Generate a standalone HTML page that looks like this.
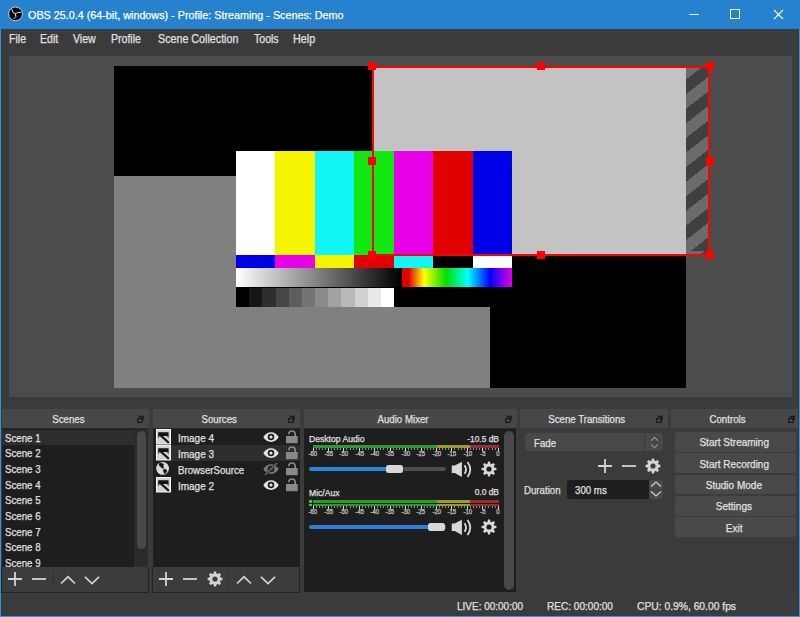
<!DOCTYPE html>
<html><head><meta charset="utf-8">
<style>
*{margin:0;padding:0;box-sizing:border-box}
html,body{width:800px;height:617px;overflow:hidden;background:#3b3b3b;font-family:"Liberation Sans",sans-serif;color:#e1e0e1}
.a{position:absolute}
.t{position:absolute;white-space:nowrap;transform-origin:0 0;line-height:1}
.tc{position:absolute;white-space:nowrap;text-align:center;line-height:1}
.tc span{display:inline-block;transform-origin:50% 0}
.t,.tc{-webkit-text-stroke:0.25px currentColor}
</style></head><body>
<!-- window frame -->
<div class="a" style="left:0;top:0;width:800px;height:29px;background:#2682cf"></div>
<div class="a" style="left:0;top:29px;width:1px;height:588px;background:#3990dc"></div>
<div class="a" style="left:799px;top:29px;width:1px;height:588px;background:#3990dc"></div>
<div class="a" style="left:0;top:616px;width:800px;height:1px;background:#3990dc"></div>
<div class="a" style="left:793px;top:29px;width:1px;height:587px;background:rgba(45,65,85,0.35)"></div>

<!-- OBS logo -->
<svg class="a" style="left:5px;top:4px" width="22" height="21" viewBox="5 4 22 21">
<circle cx="15.5" cy="13.9" r="6.9" fill="#080808" stroke="#d8d8d8" stroke-width="0.9"/>
<g fill="none" stroke="#e0e0e0" stroke-width="1" stroke-linecap="round">
<path d="M15.5 14 Q12.3 13.6 11.9 9.6"/>
<path d="M15.5 14 Q17.2 11.4 20.6 12.3"/>
<path d="M15.5 14 Q17.2 16.8 14.2 18.6"/>
</g>
</svg>
<div class="t" style="left:28px;top:9.5px;font-size:11.2px;color:#fff;transform:scaleX(0.963)">OBS 25.0.4 (64-bit, windows) - Profile: Streaming - Scenes: Demo</div>

<!-- window controls -->
<div class="a" style="left:689px;top:14px;width:10px;height:1px;background:#fff"></div>
<div class="a" style="left:730px;top:9px;width:10px;height:10px;border:1px solid #fff"></div>
<svg class="a" style="left:772.5px;top:8.5px" width="11" height="11" viewBox="0 0 11 11"><path d="M1 1L10 10M10 1L1 10" stroke="#fff" stroke-width="1.1"/></svg>

<!-- menu -->
<div class="t" style="left:9px;top:32.5px;font-size:12px;transform:scaleX(0.88)">File</div>
<div class="t" style="left:40px;top:32.5px;font-size:12px;transform:scaleX(0.88)">Edit</div>
<div class="t" style="left:73px;top:32.5px;font-size:12px;transform:scaleX(0.88)">View</div>
<div class="t" style="left:111px;top:32.5px;font-size:12px;transform:scaleX(0.88)">Profile</div>
<div class="t" style="left:157.5px;top:32.5px;font-size:12px;transform:scaleX(0.893)">Scene Collection</div>
<div class="t" style="left:253.5px;top:32.5px;font-size:12px;transform:scaleX(0.88)">Tools</div>
<div class="t" style="left:293px;top:32.5px;font-size:12px;transform:scaleX(0.9)">Help</div>

<!-- preview -->
<div class="a" style="left:8.5px;top:56px;width:783px;height:341px;background:#4c4c4c"></div>
<div class="a" id="canvas" style="left:114px;top:66px;width:572px;height:322px;background:#000;overflow:hidden">
<div class="a" style="left:0;top:110px;width:376px;height:212px;background:#808080"></div>
<div class="a" style="left:258px;top:0;width:314px;height:189px;background:#c3c3c3"></div>
<div class="a" id="bars" style="left:122px;top:85px;width:276px;height:156px;background:#000">
 <div class="a" style="left:0;top:0;width:276px;height:104px;display:flex">
  <div style="flex:1;background:#fff"></div><div style="flex:1;background:#f5f500"></div><div style="flex:1;background:#10f5f5"></div><div style="flex:1;background:#10e810"></div><div style="flex:1;background:#e800e8"></div><div style="flex:1;background:#e00000"></div><div style="flex:1;background:#0000e8"></div>
 </div>
 <div class="a" style="left:0;top:104px;width:276px;height:13px;display:flex">
  <div style="flex:1;background:#0000e8"></div><div style="flex:1;background:#e800e8"></div><div style="flex:1;background:#f5f500"></div><div style="flex:1;background:#e00000"></div><div style="flex:1;background:#10f5f5"></div><div style="flex:1;background:#000"></div><div style="flex:1;background:#fff"></div>
 </div>
 <div class="a" style="left:0;top:117px;width:165px;height:19px;background:linear-gradient(to right,#fff,#000)"></div>
 <div class="a" style="left:166px;top:117px;width:110px;height:19px;background:linear-gradient(to right,#e00000 0%,#e00000 6%,#ffff00 20%,#00e000 40%,#00ffff 60%,#0000ff 80%,#e000e0 100%)"></div>
 <div class="a" style="left:0;top:137px;width:158px;height:19px;display:flex">
  <div style="flex:1;background:#000"></div><div style="flex:1;background:#171717"></div><div style="flex:1;background:#2e2e2e"></div><div style="flex:1;background:#464646"></div><div style="flex:1;background:#5d5d5d"></div><div style="flex:1;background:#747474"></div><div style="flex:1;background:#8b8b8b"></div><div style="flex:1;background:#a2a2a2"></div><div style="flex:1;background:#b9b9b9"></div><div style="flex:1;background:#d1d1d1"></div><div style="flex:1;background:#e8e8e8"></div><div style="flex:1;background:#fff"></div>
 </div>
</div>
</div>
<!-- hatch outside canvas -->
<div class="a" style="left:686px;top:68px;width:22px;height:186px;background:repeating-linear-gradient(142deg,#6b6b6b 0px,#6b6b6b 11.5px,#404040 11.5px,#404040 23px);background-position:0 -3px"></div>
<!-- selection box -->
<div class="a" style="left:372px;top:66px;width:338px;height:190px;border:2px solid #ff0000"></div>
<div class="a" style="left:368px;top:62px;width:8px;height:8px;background:#f00"></div>
<div class="a" style="left:537px;top:62px;width:8px;height:8px;background:#f00"></div>
<div class="a" style="left:706px;top:62px;width:8px;height:8px;background:#f00"></div>
<div class="a" style="left:368px;top:157px;width:8px;height:8px;background:#f00"></div>
<div class="a" style="left:706px;top:157px;width:8px;height:8px;background:#f00"></div>
<div class="a" style="left:368px;top:251px;width:8px;height:8px;background:#f00"></div>
<div class="a" style="left:537px;top:251px;width:8px;height:8px;background:#f00"></div>
<div class="a" style="left:706px;top:251px;width:8px;height:8px;background:#f00"></div>

<!-- DOCKS -->
<div class="a" style="left:2px;top:409px;width:147px;height:19px;background:#474747"></div>
<div class="tc" style="left:8.5px;top:413.7px;width:120px;font-size:11px"><span style="transform:scaleX(0.88)">Scenes</span></div>
<svg class="a" style="left:137.2px;top:414.5px" width="8" height="8" viewBox="0 0 8 8"><path d="M1.8 0.8H6.8V4.8H5.6V2.2H1.8Z" fill="#141414"/><rect x="0.75" y="3.6" width="4.4" height="3.6" fill="#505050" stroke="#141414" stroke-width="1.3"/></svg>
<div class="a" style="left:2px;top:428px;width:147px;height:1px;background:#2a292a"></div>
<div class="a" style="left:2px;top:429px;width:132px;height:138px;background:#1f1e1f;overflow:hidden">
<div class="a" style="left:0;top:1px;width:132px;height:14.8px;background:#2f2e2f"></div>
<div class="t" style="left:3px;top:3.70px;font-size:11px;transform:scaleX(0.88)">Scene 1</div>
<div class="t" style="left:3px;top:19.34px;font-size:11px;transform:scaleX(0.88)">Scene 2</div>
<div class="t" style="left:3px;top:34.98px;font-size:11px;transform:scaleX(0.88)">Scene 3</div>
<div class="t" style="left:3px;top:50.62px;font-size:11px;transform:scaleX(0.88)">Scene 4</div>
<div class="t" style="left:3px;top:66.26px;font-size:11px;transform:scaleX(0.88)">Scene 5</div>
<div class="t" style="left:3px;top:81.90px;font-size:11px;transform:scaleX(0.88)">Scene 6</div>
<div class="t" style="left:3px;top:97.54px;font-size:11px;transform:scaleX(0.88)">Scene 7</div>
<div class="t" style="left:3px;top:113.18px;font-size:11px;transform:scaleX(0.88)">Scene 8</div>
<div class="t" style="left:3px;top:128.82px;font-size:11px;transform:scaleX(0.88)">Scene 9</div>
</div>
<div class="a" style="left:134px;top:429px;width:14px;height:138px;background:#2c2b2c"></div>
<div class="a" style="left:137px;top:431px;width:9px;height:118px;background:#4a494a;border-radius:4.5px"></div>
<div class="a" style="left:153px;top:409px;width:147px;height:19px;background:#474747"></div>
<div class="tc" style="left:159.5px;top:413.7px;width:120px;font-size:11px"><span style="transform:scaleX(0.88)">Sources</span></div>
<svg class="a" style="left:287.7px;top:414.5px" width="8" height="8" viewBox="0 0 8 8"><path d="M1.8 0.8H6.8V4.8H5.6V2.2H1.8Z" fill="#141414"/><rect x="0.75" y="3.6" width="4.4" height="3.6" fill="#505050" stroke="#141414" stroke-width="1.3"/></svg>
<div class="a" style="left:153px;top:428px;width:147px;height:1px;background:#2a292a"></div>
<div class="a" style="left:153px;top:429px;width:147px;height:138px;background:#1f1e1f;overflow:hidden">
<div class="a" style="left:18px;top:16px;width:129px;height:16px;background:#2f2e2f"></div>
<div class="t" style="left:24.5px;top:3.7px;font-size:11px;transform:scaleX(0.905)">Image 4</div>
<div class="t" style="left:24.5px;top:19.7px;font-size:11px;transform:scaleX(0.905)">Image 3</div>
<div class="t" style="left:24.5px;top:35.7px;font-size:11px;transform:scaleX(0.88)">BrowserSource</div>
<div class="t" style="left:24.5px;top:51.7px;font-size:11px;transform:scaleX(0.905)">Image 2</div>
</div>
<svg class="a" style="left:156px;top:428.5px" width="15" height="16" viewBox="0 0 15 16"><rect x="0.5" y="0.5" width="14" height="14.5" fill="#d2d2d2" stroke="#f2f2f2" stroke-width="1"/><path d="M2.2 3.2H12.6V8.4H11.6V7.1H3.2V8.4H2.2Z" fill="#111"/><path d="M5 6.8L12.2 13.2" stroke="#111" stroke-width="2.2" stroke-linecap="round"/></svg>
<svg class="a" style="left:263px;top:430.8px" width="16" height="12" viewBox="0 0 16 12"><path d="M0.3 6C4 -0.5 12 -0.5 15.7 6C12 12.5 4 12.5 0.3 6Z" fill="#e4e4e4"/><circle cx="8" cy="6" r="3.3" fill="#1f1e1f"/><circle cx="8" cy="6" r="1.6" fill="#e4e4e4"/></svg>
<svg class="a" style="left:285px;top:429px" width="13" height="16" viewBox="0 0 13 16"><path d="M3.8 5.2A3.2 3.2 0 0 1 10.2 5.2V7.5" fill="none" stroke="#8a898a" stroke-width="1.6"/><rect x="1" y="7" width="11.7" height="7.2" fill="#8a898a"/></svg>
<svg class="a" style="left:156px;top:444.5px" width="15" height="16" viewBox="0 0 15 16"><rect x="0.5" y="0.5" width="14" height="14.5" fill="#d2d2d2" stroke="#f2f2f2" stroke-width="1"/><path d="M2.2 3.2H12.6V8.4H11.6V7.1H3.2V8.4H2.2Z" fill="#111"/><path d="M5 6.8L12.2 13.2" stroke="#111" stroke-width="2.2" stroke-linecap="round"/></svg>
<svg class="a" style="left:263px;top:446.8px" width="16" height="12" viewBox="0 0 16 12"><path d="M0.3 6C4 -0.5 12 -0.5 15.7 6C12 12.5 4 12.5 0.3 6Z" fill="#e4e4e4"/><circle cx="8" cy="6" r="3.3" fill="#1f1e1f"/><circle cx="8" cy="6" r="1.6" fill="#e4e4e4"/></svg>
<svg class="a" style="left:285px;top:445px" width="13" height="16" viewBox="0 0 13 16"><path d="M3.8 5.2A3.2 3.2 0 0 1 10.2 5.2V7.5" fill="none" stroke="#8a898a" stroke-width="1.6"/><rect x="1" y="7" width="11.7" height="7.2" fill="#8a898a"/></svg>
<svg class="a" style="left:156px;top:461px" width="15" height="16" viewBox="0 0 15 16"><circle cx="6.6" cy="7.4" r="6.4" fill="#dcdcdc"/><path d="M3.67 1.89L6.1 2.21L7.72 3.51L7.08 4.81L7.72 6.43L6.75 7.4L5.46 6.75L4.48 5.46L3.35 4.97L3.19 3.19Z" fill="#141414" stroke="#141414" stroke-width="0.5" stroke-linejoin="round"/><path d="M7.72 8.05L9.67 8.37L10.97 9.67L10.64 10.97L9.35 11.94L8.7 12.91L8.05 11.61L7.4 9.99Z" fill="#141414" stroke="#141414" stroke-width="0.5" stroke-linejoin="round"/></svg>
<svg class="a" style="left:263px;top:462.8px" width="16" height="12" viewBox="0 0 16 12"><path d="M0.3 6C4 -0.5 12 -0.5 15.7 6C12 12.5 4 12.5 0.3 6Z" fill="#7a797a"/><circle cx="8" cy="6" r="3.3" fill="#1f1e1f"/><circle cx="8" cy="6" r="1.6" fill="#7a797a"/><path d="M2 12L14 0" stroke="#1f1e1f" stroke-width="2.4"/><path d="M2 12L14 0" stroke="#7a797a" stroke-width="1.1"/></svg>
<svg class="a" style="left:285px;top:461px" width="13" height="16" viewBox="0 0 13 16"><path d="M3.8 5.2A3.2 3.2 0 0 1 10.2 5.2V7.5" fill="none" stroke="#8a898a" stroke-width="1.6"/><rect x="1" y="7" width="11.7" height="7.2" fill="#8a898a"/></svg>
<svg class="a" style="left:156px;top:476.5px" width="15" height="16" viewBox="0 0 15 16"><rect x="0.5" y="0.5" width="14" height="14.5" fill="#d2d2d2" stroke="#f2f2f2" stroke-width="1"/><path d="M2.2 3.2H12.6V8.4H11.6V7.1H3.2V8.4H2.2Z" fill="#111"/><path d="M5 6.8L12.2 13.2" stroke="#111" stroke-width="2.2" stroke-linecap="round"/></svg>
<svg class="a" style="left:263px;top:478.8px" width="16" height="12" viewBox="0 0 16 12"><path d="M0.3 6C4 -0.5 12 -0.5 15.7 6C12 12.5 4 12.5 0.3 6Z" fill="#e4e4e4"/><circle cx="8" cy="6" r="3.3" fill="#1f1e1f"/><circle cx="8" cy="6" r="1.6" fill="#e4e4e4"/></svg>
<svg class="a" style="left:285px;top:477px" width="13" height="16" viewBox="0 0 13 16"><path d="M3.8 5.2A3.2 3.2 0 0 1 10.2 5.2V7.5" fill="none" stroke="#8a898a" stroke-width="1.6"/><rect x="1" y="7" width="11.7" height="7.2" fill="#8a898a"/></svg>
<div class="a" style="left:1px;top:567px;width:148px;height:26px;background:#3c3c3c;border:1px solid #242424;border-top:none"></div>
<div class="a" style="left:53px;top:570px;width:1px;height:19px;background:#343334"></div>
<svg class="a" style="left:6.800000000000001px;top:571px" width="16" height="16" viewBox="0 0 16 16"><path d="M1 8H15M8 1V15" stroke="#d4d3d4" stroke-width="1.8"/></svg>
<svg class="a" style="left:30.799999999999997px;top:571px" width="16" height="16" viewBox="0 0 16 16"><path d="M1 8H15" stroke="#d4d3d4" stroke-width="1.8"/></svg>
<svg class="a" style="left:60.400000000000006px;top:571.5px" width="16" height="16" viewBox="0 0 16 16"><path d="M1 11.5L8 4.8L15 11.5" fill="none" stroke="#d4d3d4" stroke-width="1.7"/></svg>
<svg class="a" style="left:84.3px;top:571.5px" width="16" height="16" viewBox="0 0 16 16"><path d="M1 4.8L8 11.5L15 4.8" fill="none" stroke="#d4d3d4" stroke-width="1.7"/></svg>
<div class="a" style="left:152px;top:567px;width:148px;height:26px;background:#3c3c3c;border:1px solid #242424;border-top:none"></div>
<div class="a" style="left:228px;top:570px;width:1px;height:19px;background:#343334"></div>
<svg class="a" style="left:158.3px;top:571px" width="16" height="16" viewBox="0 0 16 16"><path d="M1 8H15M8 1V15" stroke="#d4d3d4" stroke-width="1.8"/></svg>
<svg class="a" style="left:182.3px;top:571px" width="16" height="16" viewBox="0 0 16 16"><path d="M1 8H15" stroke="#d4d3d4" stroke-width="1.8"/></svg>
<svg class="a" style="left:206.5px;top:571px" width="16" height="16" viewBox="0 0 16 16"><path d="M7.06 0.56 L8.94 0.56 L9.69 2.66 L10.58 3.03 L12.60 2.07 L13.93 3.40 L12.97 5.42 L13.34 6.31 L15.44 7.06 L15.44 8.94 L13.34 9.69 L12.97 10.58 L13.93 12.60 L12.60 13.93 L10.58 12.97 L9.69 13.34 L8.94 15.44 L7.06 15.44 L6.31 13.34 L5.42 12.97 L3.40 13.93 L2.07 12.60 L3.03 10.58 L2.66 9.69 L0.56 8.94 L0.56 7.06 L2.66 6.31 L3.03 5.42 L2.07 3.40 L3.40 2.07 L5.42 3.03 L6.31 2.66Z" fill="#d4d3d4"/><circle cx="8" cy="8" r="2.6" fill="#3c3c3c"/></svg>
<svg class="a" style="left:235.7px;top:571.5px" width="16" height="16" viewBox="0 0 16 16"><path d="M1 11.5L8 4.8L15 11.5" fill="none" stroke="#d4d3d4" stroke-width="1.7"/></svg>
<svg class="a" style="left:260px;top:571.5px" width="16" height="16" viewBox="0 0 16 16"><path d="M1 4.8L8 11.5L15 4.8" fill="none" stroke="#d4d3d4" stroke-width="1.7"/></svg>
<div class="a" style="left:304px;top:409px;width:213px;height:19px;background:#474747"></div>
<div class="tc" style="left:343.5px;top:413.7px;width:120px;font-size:11px"><span style="transform:scaleX(0.88)">Audio Mixer</span></div>
<svg class="a" style="left:505px;top:414.5px" width="8" height="8" viewBox="0 0 8 8"><path d="M1.8 0.8H6.8V4.8H5.6V2.2H1.8Z" fill="#141414"/><rect x="0.75" y="3.6" width="4.4" height="3.6" fill="#505050" stroke="#141414" stroke-width="1.3"/></svg>
<div class="a" style="left:304px;top:428px;width:213px;height:1px;background:#2a292a"></div>
<div class="a" style="left:304px;top:429px;width:211.5px;height:163px;background:#1f1e1f"></div>
<div class="a" style="left:504px;top:431px;width:10px;height:159px;background:#4a494a;border-radius:5px"></div>
<div class="t" style="left:309px;top:434.09999999999997px;font-size:9.5px;transform:scaleX(0.905)">Desktop Audio</div>
<div class="t" style="left:399px;top:434.5px;width:100px;text-align:right;font-size:9px;transform-origin:100% 0;transform:scaleX(0.936)">-10.5 dB</div>
<div class="a" style="left:313px;top:445px;width:124px;height:3px;background:#2d9a2d"></div>
<div class="a" style="left:437px;top:445px;width:33px;height:3px;background:#9a9a2d"></div>
<div class="a" style="left:470px;top:445px;width:29px;height:3px;background:#9a2d2d"></div>
<div class="a" style="left:312.50px;top:448px;width:1px;height:3px;background:#d8d8d8"></div>
<div class="a" style="left:315.59px;top:448px;width:1px;height:2px;background:#8a8a8a"></div>
<div class="a" style="left:318.67px;top:448px;width:1px;height:2px;background:#8a8a8a"></div>
<div class="a" style="left:321.76px;top:448px;width:1px;height:2px;background:#8a8a8a"></div>
<div class="a" style="left:324.85px;top:448px;width:1px;height:2px;background:#8a8a8a"></div>
<div class="a" style="left:327.93px;top:448px;width:1px;height:3px;background:#d8d8d8"></div>
<div class="a" style="left:331.02px;top:448px;width:1px;height:2px;background:#8a8a8a"></div>
<div class="a" style="left:334.11px;top:448px;width:1px;height:2px;background:#8a8a8a"></div>
<div class="a" style="left:337.19px;top:448px;width:1px;height:2px;background:#8a8a8a"></div>
<div class="a" style="left:340.28px;top:448px;width:1px;height:2px;background:#8a8a8a"></div>
<div class="a" style="left:343.37px;top:448px;width:1px;height:3px;background:#d8d8d8"></div>
<div class="a" style="left:346.45px;top:448px;width:1px;height:2px;background:#8a8a8a"></div>
<div class="a" style="left:349.54px;top:448px;width:1px;height:2px;background:#8a8a8a"></div>
<div class="a" style="left:352.63px;top:448px;width:1px;height:2px;background:#8a8a8a"></div>
<div class="a" style="left:355.71px;top:448px;width:1px;height:2px;background:#8a8a8a"></div>
<div class="a" style="left:358.80px;top:448px;width:1px;height:3px;background:#d8d8d8"></div>
<div class="a" style="left:361.89px;top:448px;width:1px;height:2px;background:#8a8a8a"></div>
<div class="a" style="left:364.97px;top:448px;width:1px;height:2px;background:#8a8a8a"></div>
<div class="a" style="left:368.06px;top:448px;width:1px;height:2px;background:#8a8a8a"></div>
<div class="a" style="left:371.15px;top:448px;width:1px;height:2px;background:#8a8a8a"></div>
<div class="a" style="left:374.23px;top:448px;width:1px;height:3px;background:#d8d8d8"></div>
<div class="a" style="left:377.32px;top:448px;width:1px;height:2px;background:#8a8a8a"></div>
<div class="a" style="left:380.41px;top:448px;width:1px;height:2px;background:#8a8a8a"></div>
<div class="a" style="left:383.49px;top:448px;width:1px;height:2px;background:#8a8a8a"></div>
<div class="a" style="left:386.58px;top:448px;width:1px;height:2px;background:#8a8a8a"></div>
<div class="a" style="left:389.67px;top:448px;width:1px;height:3px;background:#d8d8d8"></div>
<div class="a" style="left:392.75px;top:448px;width:1px;height:2px;background:#8a8a8a"></div>
<div class="a" style="left:395.84px;top:448px;width:1px;height:2px;background:#8a8a8a"></div>
<div class="a" style="left:398.93px;top:448px;width:1px;height:2px;background:#8a8a8a"></div>
<div class="a" style="left:402.01px;top:448px;width:1px;height:2px;background:#8a8a8a"></div>
<div class="a" style="left:405.10px;top:448px;width:1px;height:3px;background:#d8d8d8"></div>
<div class="a" style="left:408.19px;top:448px;width:1px;height:2px;background:#8a8a8a"></div>
<div class="a" style="left:411.27px;top:448px;width:1px;height:2px;background:#8a8a8a"></div>
<div class="a" style="left:414.36px;top:448px;width:1px;height:2px;background:#8a8a8a"></div>
<div class="a" style="left:417.45px;top:448px;width:1px;height:2px;background:#8a8a8a"></div>
<div class="a" style="left:420.53px;top:448px;width:1px;height:3px;background:#d8d8d8"></div>
<div class="a" style="left:423.62px;top:448px;width:1px;height:2px;background:#8a8a8a"></div>
<div class="a" style="left:426.71px;top:448px;width:1px;height:2px;background:#8a8a8a"></div>
<div class="a" style="left:429.79px;top:448px;width:1px;height:2px;background:#8a8a8a"></div>
<div class="a" style="left:432.88px;top:448px;width:1px;height:2px;background:#8a8a8a"></div>
<div class="a" style="left:435.97px;top:448px;width:1px;height:3px;background:#d8d8d8"></div>
<div class="a" style="left:439.05px;top:448px;width:1px;height:2px;background:#8a8a8a"></div>
<div class="a" style="left:442.14px;top:448px;width:1px;height:2px;background:#8a8a8a"></div>
<div class="a" style="left:445.23px;top:448px;width:1px;height:2px;background:#8a8a8a"></div>
<div class="a" style="left:448.31px;top:448px;width:1px;height:2px;background:#8a8a8a"></div>
<div class="a" style="left:451.40px;top:448px;width:1px;height:3px;background:#d8d8d8"></div>
<div class="a" style="left:454.49px;top:448px;width:1px;height:2px;background:#8a8a8a"></div>
<div class="a" style="left:457.57px;top:448px;width:1px;height:2px;background:#8a8a8a"></div>
<div class="a" style="left:460.66px;top:448px;width:1px;height:2px;background:#8a8a8a"></div>
<div class="a" style="left:463.75px;top:448px;width:1px;height:2px;background:#8a8a8a"></div>
<div class="a" style="left:466.83px;top:448px;width:1px;height:3px;background:#d8d8d8"></div>
<div class="a" style="left:469.92px;top:448px;width:1px;height:2px;background:#8a8a8a"></div>
<div class="a" style="left:473.01px;top:448px;width:1px;height:2px;background:#8a8a8a"></div>
<div class="a" style="left:476.09px;top:448px;width:1px;height:2px;background:#8a8a8a"></div>
<div class="a" style="left:479.18px;top:448px;width:1px;height:2px;background:#8a8a8a"></div>
<div class="a" style="left:482.27px;top:448px;width:1px;height:3px;background:#d8d8d8"></div>
<div class="a" style="left:485.35px;top:448px;width:1px;height:2px;background:#8a8a8a"></div>
<div class="a" style="left:488.44px;top:448px;width:1px;height:2px;background:#8a8a8a"></div>
<div class="a" style="left:491.53px;top:448px;width:1px;height:2px;background:#8a8a8a"></div>
<div class="a" style="left:494.61px;top:448px;width:1px;height:2px;background:#8a8a8a"></div>
<div class="a" style="left:497.70px;top:448px;width:1px;height:3px;background:#d8d8d8"></div>
<div class="tc" style="left:298.00px;top:451px;width:30px;font-size:6.6px;color:#c8c8c8"><span style="transform:scaleX(0.9)">-60</span></div>
<div class="tc" style="left:313.43px;top:451px;width:30px;font-size:6.6px;color:#c8c8c8"><span style="transform:scaleX(0.9)">-55</span></div>
<div class="tc" style="left:328.87px;top:451px;width:30px;font-size:6.6px;color:#c8c8c8"><span style="transform:scaleX(0.9)">-50</span></div>
<div class="tc" style="left:344.30px;top:451px;width:30px;font-size:6.6px;color:#c8c8c8"><span style="transform:scaleX(0.9)">-45</span></div>
<div class="tc" style="left:359.73px;top:451px;width:30px;font-size:6.6px;color:#c8c8c8"><span style="transform:scaleX(0.9)">-40</span></div>
<div class="tc" style="left:375.17px;top:451px;width:30px;font-size:6.6px;color:#c8c8c8"><span style="transform:scaleX(0.9)">-35</span></div>
<div class="tc" style="left:390.60px;top:451px;width:30px;font-size:6.6px;color:#c8c8c8"><span style="transform:scaleX(0.9)">-30</span></div>
<div class="tc" style="left:406.03px;top:451px;width:30px;font-size:6.6px;color:#c8c8c8"><span style="transform:scaleX(0.9)">-25</span></div>
<div class="tc" style="left:421.47px;top:451px;width:30px;font-size:6.6px;color:#c8c8c8"><span style="transform:scaleX(0.9)">-20</span></div>
<div class="tc" style="left:436.90px;top:451px;width:30px;font-size:6.6px;color:#c8c8c8"><span style="transform:scaleX(0.9)">-15</span></div>
<div class="tc" style="left:452.33px;top:451px;width:30px;font-size:6.6px;color:#c8c8c8"><span style="transform:scaleX(0.9)">-10</span></div>
<div class="tc" style="left:467.77px;top:451px;width:30px;font-size:6.6px;color:#c8c8c8"><span style="transform:scaleX(0.9)">-5</span></div>
<div class="tc" style="left:483.20px;top:451px;width:30px;font-size:6.6px;color:#c8c8c8"><span style="transform:scaleX(0.9)">0</span></div>
<div class="a" style="left:309px;top:467px;width:84px;height:4px;background:#2a82da;border-radius:2px"></div>
<div class="a" style="left:403px;top:467px;width:43px;height:4px;background:#4e4d4e;border-radius:2px"></div>
<div class="a" style="left:386px;top:465px;width:16.5px;height:8px;background:#d8d8d8;border-radius:2.5px"></div>
<svg class="a" style="left:450px;top:460px" width="24" height="19" viewBox="0 0 24 19"><path d="M1.75 5.5H4.75L11.9 1.75V17.1L4.75 13H1.75Z" fill="#d8d8d8"/><path d="M14.5 5.2Q17.5 9.5 14.5 13.8" fill="none" stroke="#d8d8d8" stroke-width="1.8"/><path d="M17.5 2Q23 9.5 17.5 17" fill="none" stroke="#d8d8d8" stroke-width="1.8"/></svg>
<svg class="a" style="left:480.5px;top:461.25px" width="16" height="16" viewBox="0 0 16 16"><path d="M7.06 0.56 L8.94 0.56 L9.60 2.95 L10.44 3.30 L12.60 2.07 L13.93 3.40 L12.70 5.56 L13.05 6.40 L15.44 7.06 L15.44 8.94 L13.05 9.60 L12.70 10.44 L13.93 12.60 L12.60 13.93 L10.44 12.70 L9.60 13.05 L8.94 15.44 L7.06 15.44 L6.40 13.05 L5.56 12.70 L3.40 13.93 L2.07 12.60 L3.30 10.44 L2.95 9.60 L0.56 8.94 L0.56 7.06 L2.95 6.40 L3.30 5.56 L2.07 3.40 L3.40 2.07 L5.56 3.30 L6.40 2.95Z" fill="#d8d8d8"/><circle cx="8" cy="8" r="2.6" fill="#1f1e1f"/></svg>
<div class="t" style="left:309px;top:487.7px;font-size:9.5px;transform:scaleX(0.905)">Mic/Aux</div>
<div class="t" style="left:399px;top:488.1px;width:100px;text-align:right;font-size:9px;transform-origin:100% 0;transform:scaleX(0.936)">0.0 dB</div>
<div class="a" style="left:309px;top:500.0px;width:2.5px;height:2.5px;background:#3cc43c"></div>
<div class="a" style="left:309px;top:503.5px;width:2.5px;height:2.5px;background:#3cc43c"></div>
<div class="a" style="left:313px;top:500.0px;width:124px;height:2.5px;background:#2d9a2d"></div>
<div class="a" style="left:437px;top:500.0px;width:33px;height:2.5px;background:#9a9a2d"></div>
<div class="a" style="left:470px;top:500.0px;width:29px;height:2.5px;background:#9a2d2d"></div>
<div class="a" style="left:313px;top:503.5px;width:124px;height:2.5px;background:#2d9a2d"></div>
<div class="a" style="left:437px;top:503.5px;width:33px;height:2.5px;background:#9a9a2d"></div>
<div class="a" style="left:470px;top:503.5px;width:29px;height:2.5px;background:#9a2d2d"></div>
<div class="a" style="left:312.50px;top:506.0px;width:1px;height:3px;background:#d8d8d8"></div>
<div class="a" style="left:315.59px;top:506.0px;width:1px;height:2px;background:#8a8a8a"></div>
<div class="a" style="left:318.67px;top:506.0px;width:1px;height:2px;background:#8a8a8a"></div>
<div class="a" style="left:321.76px;top:506.0px;width:1px;height:2px;background:#8a8a8a"></div>
<div class="a" style="left:324.85px;top:506.0px;width:1px;height:2px;background:#8a8a8a"></div>
<div class="a" style="left:327.93px;top:506.0px;width:1px;height:3px;background:#d8d8d8"></div>
<div class="a" style="left:331.02px;top:506.0px;width:1px;height:2px;background:#8a8a8a"></div>
<div class="a" style="left:334.11px;top:506.0px;width:1px;height:2px;background:#8a8a8a"></div>
<div class="a" style="left:337.19px;top:506.0px;width:1px;height:2px;background:#8a8a8a"></div>
<div class="a" style="left:340.28px;top:506.0px;width:1px;height:2px;background:#8a8a8a"></div>
<div class="a" style="left:343.37px;top:506.0px;width:1px;height:3px;background:#d8d8d8"></div>
<div class="a" style="left:346.45px;top:506.0px;width:1px;height:2px;background:#8a8a8a"></div>
<div class="a" style="left:349.54px;top:506.0px;width:1px;height:2px;background:#8a8a8a"></div>
<div class="a" style="left:352.63px;top:506.0px;width:1px;height:2px;background:#8a8a8a"></div>
<div class="a" style="left:355.71px;top:506.0px;width:1px;height:2px;background:#8a8a8a"></div>
<div class="a" style="left:358.80px;top:506.0px;width:1px;height:3px;background:#d8d8d8"></div>
<div class="a" style="left:361.89px;top:506.0px;width:1px;height:2px;background:#8a8a8a"></div>
<div class="a" style="left:364.97px;top:506.0px;width:1px;height:2px;background:#8a8a8a"></div>
<div class="a" style="left:368.06px;top:506.0px;width:1px;height:2px;background:#8a8a8a"></div>
<div class="a" style="left:371.15px;top:506.0px;width:1px;height:2px;background:#8a8a8a"></div>
<div class="a" style="left:374.23px;top:506.0px;width:1px;height:3px;background:#d8d8d8"></div>
<div class="a" style="left:377.32px;top:506.0px;width:1px;height:2px;background:#8a8a8a"></div>
<div class="a" style="left:380.41px;top:506.0px;width:1px;height:2px;background:#8a8a8a"></div>
<div class="a" style="left:383.49px;top:506.0px;width:1px;height:2px;background:#8a8a8a"></div>
<div class="a" style="left:386.58px;top:506.0px;width:1px;height:2px;background:#8a8a8a"></div>
<div class="a" style="left:389.67px;top:506.0px;width:1px;height:3px;background:#d8d8d8"></div>
<div class="a" style="left:392.75px;top:506.0px;width:1px;height:2px;background:#8a8a8a"></div>
<div class="a" style="left:395.84px;top:506.0px;width:1px;height:2px;background:#8a8a8a"></div>
<div class="a" style="left:398.93px;top:506.0px;width:1px;height:2px;background:#8a8a8a"></div>
<div class="a" style="left:402.01px;top:506.0px;width:1px;height:2px;background:#8a8a8a"></div>
<div class="a" style="left:405.10px;top:506.0px;width:1px;height:3px;background:#d8d8d8"></div>
<div class="a" style="left:408.19px;top:506.0px;width:1px;height:2px;background:#8a8a8a"></div>
<div class="a" style="left:411.27px;top:506.0px;width:1px;height:2px;background:#8a8a8a"></div>
<div class="a" style="left:414.36px;top:506.0px;width:1px;height:2px;background:#8a8a8a"></div>
<div class="a" style="left:417.45px;top:506.0px;width:1px;height:2px;background:#8a8a8a"></div>
<div class="a" style="left:420.53px;top:506.0px;width:1px;height:3px;background:#d8d8d8"></div>
<div class="a" style="left:423.62px;top:506.0px;width:1px;height:2px;background:#8a8a8a"></div>
<div class="a" style="left:426.71px;top:506.0px;width:1px;height:2px;background:#8a8a8a"></div>
<div class="a" style="left:429.79px;top:506.0px;width:1px;height:2px;background:#8a8a8a"></div>
<div class="a" style="left:432.88px;top:506.0px;width:1px;height:2px;background:#8a8a8a"></div>
<div class="a" style="left:435.97px;top:506.0px;width:1px;height:3px;background:#d8d8d8"></div>
<div class="a" style="left:439.05px;top:506.0px;width:1px;height:2px;background:#8a8a8a"></div>
<div class="a" style="left:442.14px;top:506.0px;width:1px;height:2px;background:#8a8a8a"></div>
<div class="a" style="left:445.23px;top:506.0px;width:1px;height:2px;background:#8a8a8a"></div>
<div class="a" style="left:448.31px;top:506.0px;width:1px;height:2px;background:#8a8a8a"></div>
<div class="a" style="left:451.40px;top:506.0px;width:1px;height:3px;background:#d8d8d8"></div>
<div class="a" style="left:454.49px;top:506.0px;width:1px;height:2px;background:#8a8a8a"></div>
<div class="a" style="left:457.57px;top:506.0px;width:1px;height:2px;background:#8a8a8a"></div>
<div class="a" style="left:460.66px;top:506.0px;width:1px;height:2px;background:#8a8a8a"></div>
<div class="a" style="left:463.75px;top:506.0px;width:1px;height:2px;background:#8a8a8a"></div>
<div class="a" style="left:466.83px;top:506.0px;width:1px;height:3px;background:#d8d8d8"></div>
<div class="a" style="left:469.92px;top:506.0px;width:1px;height:2px;background:#8a8a8a"></div>
<div class="a" style="left:473.01px;top:506.0px;width:1px;height:2px;background:#8a8a8a"></div>
<div class="a" style="left:476.09px;top:506.0px;width:1px;height:2px;background:#8a8a8a"></div>
<div class="a" style="left:479.18px;top:506.0px;width:1px;height:2px;background:#8a8a8a"></div>
<div class="a" style="left:482.27px;top:506.0px;width:1px;height:3px;background:#d8d8d8"></div>
<div class="a" style="left:485.35px;top:506.0px;width:1px;height:2px;background:#8a8a8a"></div>
<div class="a" style="left:488.44px;top:506.0px;width:1px;height:2px;background:#8a8a8a"></div>
<div class="a" style="left:491.53px;top:506.0px;width:1px;height:2px;background:#8a8a8a"></div>
<div class="a" style="left:494.61px;top:506.0px;width:1px;height:2px;background:#8a8a8a"></div>
<div class="a" style="left:497.70px;top:506.0px;width:1px;height:3px;background:#d8d8d8"></div>
<div class="tc" style="left:298.00px;top:509.0px;width:30px;font-size:6.6px;color:#c8c8c8"><span style="transform:scaleX(0.9)">-60</span></div>
<div class="tc" style="left:313.43px;top:509.0px;width:30px;font-size:6.6px;color:#c8c8c8"><span style="transform:scaleX(0.9)">-55</span></div>
<div class="tc" style="left:328.87px;top:509.0px;width:30px;font-size:6.6px;color:#c8c8c8"><span style="transform:scaleX(0.9)">-50</span></div>
<div class="tc" style="left:344.30px;top:509.0px;width:30px;font-size:6.6px;color:#c8c8c8"><span style="transform:scaleX(0.9)">-45</span></div>
<div class="tc" style="left:359.73px;top:509.0px;width:30px;font-size:6.6px;color:#c8c8c8"><span style="transform:scaleX(0.9)">-40</span></div>
<div class="tc" style="left:375.17px;top:509.0px;width:30px;font-size:6.6px;color:#c8c8c8"><span style="transform:scaleX(0.9)">-35</span></div>
<div class="tc" style="left:390.60px;top:509.0px;width:30px;font-size:6.6px;color:#c8c8c8"><span style="transform:scaleX(0.9)">-30</span></div>
<div class="tc" style="left:406.03px;top:509.0px;width:30px;font-size:6.6px;color:#c8c8c8"><span style="transform:scaleX(0.9)">-25</span></div>
<div class="tc" style="left:421.47px;top:509.0px;width:30px;font-size:6.6px;color:#c8c8c8"><span style="transform:scaleX(0.9)">-20</span></div>
<div class="tc" style="left:436.90px;top:509.0px;width:30px;font-size:6.6px;color:#c8c8c8"><span style="transform:scaleX(0.9)">-15</span></div>
<div class="tc" style="left:452.33px;top:509.0px;width:30px;font-size:6.6px;color:#c8c8c8"><span style="transform:scaleX(0.9)">-10</span></div>
<div class="tc" style="left:467.77px;top:509.0px;width:30px;font-size:6.6px;color:#c8c8c8"><span style="transform:scaleX(0.9)">-5</span></div>
<div class="tc" style="left:483.20px;top:509.0px;width:30px;font-size:6.6px;color:#c8c8c8"><span style="transform:scaleX(0.9)">0</span></div>
<div class="a" style="left:309px;top:525.0px;width:126px;height:4px;background:#2a82da;border-radius:2px"></div>
<div class="a" style="left:445px;top:525.0px;width:1px;height:4px;background:#4e4d4e;border-radius:2px"></div>
<div class="a" style="left:428px;top:523.0px;width:16.5px;height:8px;background:#d8d8d8;border-radius:2.5px"></div>
<svg class="a" style="left:450px;top:518.0px" width="24" height="19" viewBox="0 0 24 19"><path d="M1.75 5.5H4.75L11.9 1.75V17.1L4.75 13H1.75Z" fill="#d8d8d8"/><path d="M14.5 5.2Q17.5 9.5 14.5 13.8" fill="none" stroke="#d8d8d8" stroke-width="1.8"/><path d="M17.5 2Q23 9.5 17.5 17" fill="none" stroke="#d8d8d8" stroke-width="1.8"/></svg>
<svg class="a" style="left:480.5px;top:519.25px" width="16" height="16" viewBox="0 0 16 16"><path d="M7.06 0.56 L8.94 0.56 L9.60 2.95 L10.44 3.30 L12.60 2.07 L13.93 3.40 L12.70 5.56 L13.05 6.40 L15.44 7.06 L15.44 8.94 L13.05 9.60 L12.70 10.44 L13.93 12.60 L12.60 13.93 L10.44 12.70 L9.60 13.05 L8.94 15.44 L7.06 15.44 L6.40 13.05 L5.56 12.70 L3.40 13.93 L2.07 12.60 L3.30 10.44 L2.95 9.60 L0.56 8.94 L0.56 7.06 L2.95 6.40 L3.30 5.56 L2.07 3.40 L3.40 2.07 L5.56 3.30 L6.40 2.95Z" fill="#d8d8d8"/><circle cx="8" cy="8" r="2.6" fill="#1f1e1f"/></svg>
<div class="a" style="left:520px;top:409px;width:148px;height:19px;background:#474747"></div>
<div class="tc" style="left:527.0px;top:413.7px;width:120px;font-size:11px"><span style="transform:scaleX(0.88)">Scene Transitions</span></div>
<svg class="a" style="left:656px;top:414.5px" width="8" height="8" viewBox="0 0 8 8"><path d="M1.8 0.8H6.8V4.8H5.6V2.2H1.8Z" fill="#141414"/><rect x="0.75" y="3.6" width="4.4" height="3.6" fill="#505050" stroke="#141414" stroke-width="1.3"/></svg>
<div class="a" style="left:520px;top:428px;width:148px;height:164px;background:#3b3b3b"></div>
<div class="a" style="left:525px;top:433px;width:138px;height:18px;background:#4a494a;border-radius:3px"></div>
<div class="a" style="left:644px;top:433px;width:1px;height:18px;background:#3b3b3b"></div>
<div class="t" style="left:533.5px;top:438px;font-size:11px;transform:scaleX(0.88)">Fade</div>
<svg class="a" style="left:649.5px;top:435.3px" width="9" height="15" viewBox="0 0 9 15"><path d="M1.2 5.6L4.5 2.4L7.8 5.6M1.2 9.6L4.5 12.8L7.8 9.6" fill="none" stroke="#c0c0c0" stroke-width="1"/></svg>
<svg class="a" style="left:597px;top:458px" width="16" height="16" viewBox="0 0 16 16"><path d="M1 8H15M8 1V15" stroke="#d4d3d4" stroke-width="1.8"/></svg>
<svg class="a" style="left:621px;top:458px" width="16" height="16" viewBox="0 0 16 16"><path d="M1 8H15" stroke="#d4d3d4" stroke-width="1.8"/></svg>
<svg class="a" style="left:645.3px;top:458px" width="16" height="16" viewBox="0 0 16 16"><path d="M7.06 0.56 L8.94 0.56 L9.69 2.66 L10.58 3.03 L12.60 2.07 L13.93 3.40 L12.97 5.42 L13.34 6.31 L15.44 7.06 L15.44 8.94 L13.34 9.69 L12.97 10.58 L13.93 12.60 L12.60 13.93 L10.58 12.97 L9.69 13.34 L8.94 15.44 L7.06 15.44 L6.31 13.34 L5.42 12.97 L3.40 13.93 L2.07 12.60 L3.03 10.58 L2.66 9.69 L0.56 8.94 L0.56 7.06 L2.66 6.31 L3.03 5.42 L2.07 3.40 L3.40 2.07 L5.42 3.03 L6.31 2.66Z" fill="#d4d3d4"/><circle cx="8" cy="8" r="2.6" fill="#3c3c3c"/></svg>
<div class="t" style="left:524px;top:485px;font-size:11px;transform:scaleX(0.88)">Duration</div>
<div class="a" style="left:566.5px;top:479.5px;width:82px;height:19px;background:#1f1e1f;border-radius:3px 0 0 3px"></div>
<div class="t" style="left:574.5px;top:485px;font-size:11px;transform:scaleX(0.88)">300 ms</div>
<div class="a" style="left:648.5px;top:479.5px;width:14.5px;height:9.5px;background:#4a494a;border-radius:3px 3px 0 0"></div>
<div class="a" style="left:648.5px;top:489.5px;width:14.5px;height:9px;background:#4a494a;border-radius:0 0 3px 3px"></div>
<svg class="a" style="left:650px;top:480px" width="12" height="18" viewBox="0 0 12 18"><path d="M1 6.5L6 2L11 6.5M1 11.5L6 16L11 11.5" fill="none" stroke="#d0d0d0" stroke-width="1.2"/></svg>
<div class="a" style="left:671px;top:409px;width:127px;height:19px;background:#474747"></div>
<div class="tc" style="left:667.5px;top:413.7px;width:120px;font-size:11px"><span style="transform:scaleX(0.88)">Controls</span></div>
<svg class="a" style="left:787.8px;top:414.5px" width="8" height="8" viewBox="0 0 8 8"><path d="M1.8 0.8H6.8V4.8H5.6V2.2H1.8Z" fill="#141414"/><rect x="0.75" y="3.6" width="4.4" height="3.6" fill="#505050" stroke="#141414" stroke-width="1.3"/></svg>
<div class="a" style="left:671px;top:428px;width:127px;height:164px;background:#3b3b3b"></div>
<div class="a" style="left:675px;top:432.00px;width:120.5px;height:19.5px;background:#4a494a;border-radius:2px"></div>
<div class="tc" style="left:674px;top:437.20px;width:120.5px;font-size:11px"><span style="transform:scaleX(0.91)">Start Streaming</span></div>
<div class="a" style="left:675px;top:453.35px;width:120.5px;height:19.5px;background:#4a494a;border-radius:2px"></div>
<div class="tc" style="left:674px;top:458.55px;width:120.5px;font-size:11px"><span style="transform:scaleX(0.91)">Start Recording</span></div>
<div class="a" style="left:675px;top:474.70px;width:120.5px;height:19.5px;background:#4a494a;border-radius:2px"></div>
<div class="tc" style="left:674px;top:479.90px;width:120.5px;font-size:11px"><span style="transform:scaleX(0.91)">Studio Mode</span></div>
<div class="a" style="left:675px;top:496.05px;width:120.5px;height:19.5px;background:#4a494a;border-radius:2px"></div>
<div class="tc" style="left:674px;top:501.25px;width:120.5px;font-size:11px"><span style="transform:scaleX(0.91)">Settings</span></div>
<div class="a" style="left:675px;top:517.40px;width:120.5px;height:19.5px;background:#4a494a;border-radius:2px"></div>
<div class="tc" style="left:674px;top:522.60px;width:120.5px;font-size:11px"><span style="transform:scaleX(0.91)">Exit</span></div>
<div class="t" style="left:457px;top:601px;font-size:11px;transform:scaleX(0.907)">LIVE: 00:00:00</div>
<div class="t" style="left:547px;top:601px;font-size:11px;transform:scaleX(0.914)">REC: 00:00:00</div>
<div class="t" style="left:637px;top:601px;font-size:11px;transform:scaleX(0.936)">CPU: 0.9%, 60.00 fps</div>
<!-- /DOCKS -->
</body></html>
